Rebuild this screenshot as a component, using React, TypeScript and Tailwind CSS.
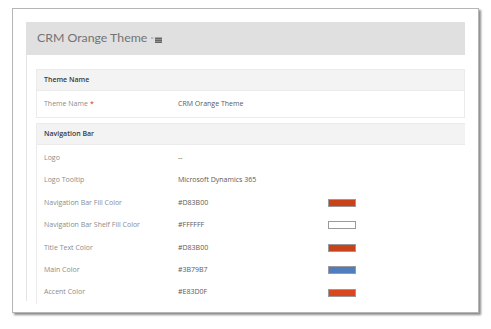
import React from "react";

type Row = { label: string; value: string; swatch?: string; required?: boolean };

const navRows: Row[] = [
  { label: "Logo", value: "--" },
  { label: "Logo Tooltip", value: "Microsoft Dynamics 365" },
  { label: "Navigation Bar Fill Color", value: "#D83B00", swatch: "#c9421a" },
  { label: "Navigation Bar Shelf Fill Color", value: "#FFFFFF", swatch: "#ffffff" },
  { label: "Title Text Color", value: "#D83B00", swatch: "#c9421a" },
  { label: "Main Color", value: "#3B79B7", swatch: "#4f7dbd" },
  { label: "Accent Color", value: "#E83D0F", swatch: "#d9471f" },
];

const FieldRow: React.FC<{ row: Row; height: string }> = ({ row, height }) => (
  <div className={`flex items-center ${height}`}>
    <div className="w-[141px] pl-[7px] text-[#8c8c8c]">
      {row.label}
      {row.required && <span className="text-[#d0312d] ml-[2px]">*</span>}
    </div>
    <div className="w-[150px] text-[#5a5a5a]">{row.value}</div>
    {row.swatch && (
      <div
        className="w-[28px] h-[8px] border border-[#9a9a9a]"
        style={{ backgroundColor: row.swatch }}
      />
    )}
  </div>
);

const SectionHeader: React.FC<{ title: string }> = ({ title }) => (
  <div className="h-[21px] bg-[#f3f3f3] border-b border-[#ebebeb] flex items-center pl-[7px] font-semibold text-[#3a3a3a]">
    {title}
  </div>
);

const App: React.FC = () => {
  return (
    <div
      className="w-[491px] h-[329px] bg-white pt-[8px] pl-[12px] text-[7px]"
      style={{ fontFamily: '"Open Sans", "Noto Sans", sans-serif' }}
    >
      <div className="w-[467px] h-[305px] bg-white border border-[#b5b5b5] shadow-[2px_2px_2px_rgba(0,0,0,0.45)] pt-[13px] pl-[13px] pr-[13px]">
        <div className="h-[33px] bg-[#e0e0e0] flex items-center pl-[11px] gap-[4px]">
          <span
            className="text-[12.3px] text-[#737373]"
            style={{ fontFamily: 'Lato, "Open Sans", sans-serif' }}
          >
            CRM Orange Theme
          </span>
          <svg width="11" height="8" viewBox="0 0 11 8" className="mt-[3px]">
            <rect x="0" y="1.5" width="2.5" height="1" fill="#999" />
            <rect x="4" y="1.5" width="7" height="5.5" fill="#666" />
            <rect x="4" y="3.4" width="7" height="0.6" fill="#aaa" />
            <rect x="4" y="5.2" width="7" height="0.6" fill="#aaa" />
          </svg>
        </div>
        <div className="border-l border-[#e4e4e4] h-[246px] pl-[9px] pt-[14px]">
          <div className="border border-[#ebebeb]">
            <SectionHeader title="Theme Name" />
            <FieldRow row={{ label: "Theme Name", value: "CRM Orange Theme", required: true }} height="h-[26px]" />
          </div>
          <div className="mt-[5px] border-t border-l border-[#ebebeb]">
            <SectionHeader title="Navigation Bar" />
            <div className="pt-[2px]">
              {navRows.map((r) => (
                <FieldRow key={r.label} row={r} height="h-[22.4px]" />
              ))}
            </div>
          </div>
        </div>
      </div>
    </div>
  );
};

export default App;
